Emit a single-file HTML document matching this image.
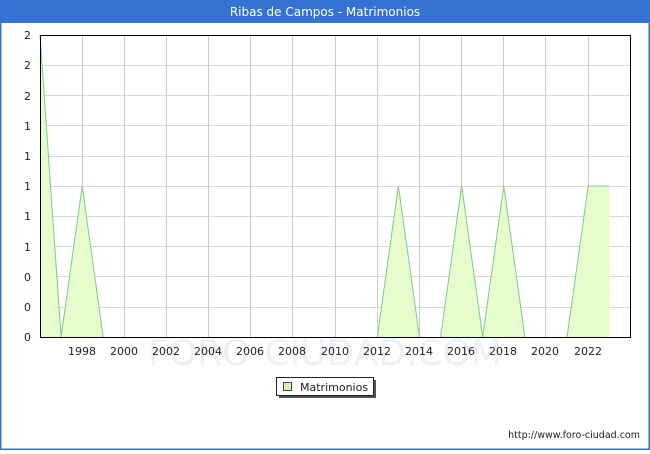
<!DOCTYPE html>
<html><head><meta charset="utf-8"><style>
html,body{margin:0;padding:0;background:#fff;}
body{width:650px;height:450px;overflow:hidden;font-family:"DejaVu Sans","Liberation Sans",sans-serif;}
</style></head><body>
<svg width="650" height="450" xmlns="http://www.w3.org/2000/svg" font-family="DejaVu Sans, Liberation Sans, sans-serif">
<rect x="0" y="0" width="650" height="450" fill="#fff"/>
<rect x="0" y="0" width="650" height="23" fill="#3473d4"/>
<rect x="0" y="0" width="1.5" height="450" fill="#3473d4"/>
<rect x="648.5" y="0" width="1.5" height="450" fill="#3473d4"/>
<rect x="0" y="448.5" width="650" height="1.5" fill="#3473d4"/>
<text x="325" y="16" fill="#fff" font-size="12" text-anchor="middle">Ribas de Campos - Matrimonios</text>
<text x="325" y="365" fill="#eef0f8" font-size="36" text-anchor="middle">FORO-CIUDAD.COM</text>
<g stroke="#d8d8d8" stroke-width="1">
<line x1="40" y1="65.5" x2="630" y2="65.5"/><line x1="40" y1="95.5" x2="630" y2="95.5"/><line x1="40" y1="125.5" x2="630" y2="125.5"/><line x1="40" y1="156.5" x2="630" y2="156.5"/><line x1="40" y1="186.5" x2="630" y2="186.5"/><line x1="40" y1="216.5" x2="630" y2="216.5"/><line x1="40" y1="246.5" x2="630" y2="246.5"/><line x1="40" y1="276.5" x2="630" y2="276.5"/><line x1="40" y1="307.5" x2="630" y2="307.5"/>
</g>
<g stroke="#cccccc" stroke-width="1">
<line x1="82.5" y1="35" x2="82.5" y2="337"/><line x1="124.5" y1="35" x2="124.5" y2="337"/><line x1="166.5" y1="35" x2="166.5" y2="337"/><line x1="208.5" y1="35" x2="208.5" y2="337"/><line x1="250.5" y1="35" x2="250.5" y2="337"/><line x1="292.5" y1="35" x2="292.5" y2="337"/><line x1="335.5" y1="35" x2="335.5" y2="337"/><line x1="377.5" y1="35" x2="377.5" y2="337"/><line x1="419.5" y1="35" x2="419.5" y2="337"/><line x1="461.5" y1="35" x2="461.5" y2="337"/><line x1="503.5" y1="35" x2="503.5" y2="337"/><line x1="545.5" y1="35" x2="545.5" y2="337"/><line x1="588.5" y1="35" x2="588.5" y2="337"/>
</g>
<path d="M40,35 L61.1,337 L82.2,186 L103.2,337 L377.3,337 L398.4,186 L419.5,337 L440.6,337 L461.7,186 L482.7,337 L503.8,186 L524.9,337 L567.1,337 L588.2,186 L609.2,186 L609.2,337 L40,337 Z" fill="#e6fccc" stroke="none"/>
<path d="M40,35 L61.1,337 L82.2,186 L103.2,337 M377.3,337 L398.4,186 L419.5,337 M440.6,337 L461.7,186 L482.7,337 L503.8,186 L524.9,337 M567.1,337 L588.2,186 L609.2,186" fill="none" stroke="#80c890" stroke-width="1"/>
<rect x="40.5" y="35.5" width="590" height="302" fill="none" stroke="#000" stroke-width="1"/>
<g font-size="11" fill="#222" text-anchor="end">
<text x="31" y="39">2</text><text x="31" y="69">2</text><text x="31" y="100">2</text><text x="31" y="130">1</text><text x="31" y="160">1</text><text x="31" y="190">1</text><text x="31" y="220">1</text><text x="31" y="251">1</text><text x="31" y="281">0</text><text x="31" y="311">0</text><text x="31" y="341">0</text>
</g>
<g font-size="11" fill="#222" text-anchor="middle">
<text x="82" y="355">1998</text><text x="124" y="355">2000</text><text x="166" y="355">2002</text><text x="208" y="355">2004</text><text x="250" y="355">2006</text><text x="292" y="355">2008</text><text x="335" y="355">2010</text><text x="377" y="355">2012</text><text x="419" y="355">2014</text><text x="461" y="355">2016</text><text x="503" y="355">2018</text><text x="545" y="355">2020</text><text x="588" y="355">2022</text>
</g>
<rect x="279" y="380" width="97" height="18" fill="#555"/>
<rect x="276.5" y="377.5" width="97" height="18" fill="#fff" stroke="#222" stroke-width="1"/>
<rect x="283.5" y="382.5" width="8" height="8" fill="#d4f8b0" stroke="#444" stroke-width="1"/>
<text x="300" y="391" font-size="11" fill="#222">Matrimonios</text>
<text x="640" y="438" font-size="9.5" fill="#222" text-anchor="end">http://www.foro-ciudad.com</text>
</svg>
</body></html>
